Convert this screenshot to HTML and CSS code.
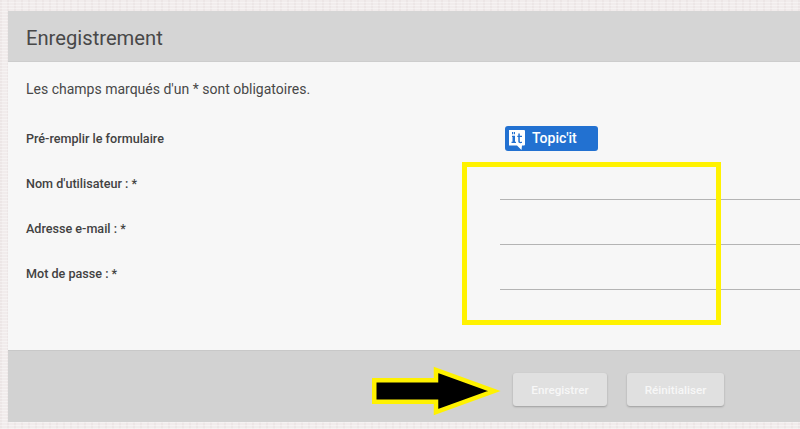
FILE: index.html
```html
<!DOCTYPE html>
<html lang="fr">
<head>
<meta charset="utf-8">
<title>Enregistrement</title>
<link rel="stylesheet" href="styles.css">
</head>
<body>
<main class="card">
  <header class="card-head"><h1>Enregistrement</h1></header>
  <form class="card-body">
    <p class="note">Les champs marqués d'un * sont obligatoires.</p>
    <div class="row row-topic">
      <span class="label">Pré-remplir le formulaire</span>
      <a class="topic" href="#">
        <svg class="topic-icon" width="16" height="20" viewBox="0 0 16 20" aria-hidden="true">
          <path d="M1 0h14a1 1 0 0 1 1 1v13.500a1 1 0 0 1-1 1h-2l-.5 4.500-4.500-4.500h-7.500a1 1 0 0 1-1-1v-13.500a1 1 0 0 1 1-1z" fill="#fff"/>
          <path d="M3 2h1.300v2.200h-1.300zM5 2h1v2.200h-1zM3 5.800h3v6h1v1.200h-4.500v-1.200h1v-4.800h-.5zM9.300 3.500h1.500v2.300h2.200v1.200h-2.200v4.300c0 .7.700.8 2.200.5v1.200c-2.300.4-3.700.1-3.700-1.500v-4.500h-1v-1.200h1z" fill="#2271d1"/>
        </svg>
        <span>Topic'it</span>
      </a>
    </div>
    <div class="row"><label class="label">Nom d'utilisateur : *</label><span class="field"></span></div>
    <div class="row"><label class="label">Adresse e-mail : *</label><span class="field"></span></div>
    <div class="row"><label class="label">Mot de passe : *</label><span class="field"></span></div>
  </form>
  <footer class="card-foot">
    <button class="btn btn-save" type="button">Enregistrer</button>
    <button class="btn btn-reset" type="button">Réinitialiser</button>
  </footer>
</main>
<div class="mark-box"></div>
<svg class="mark-arrow" width="134" height="50" viewBox="0 0 134 50" aria-hidden="true">
  <path d="M3.250 14.250h61.750v-10.250l58 21-58 21v-10.250h-61.750z" fill="#000" stroke="#fff200" stroke-width="4.500"/>
</svg>
</body>
</html>
```
FILE: styles.css
```css
* { box-sizing: border-box; }
html, body { height: 100%; }
body {
  margin: 0;
  overflow: hidden;
  background-color: #f1ecec;
  background-image:
    repeating-linear-gradient(0deg, rgba(255,255,255,.35) 0 1px, transparent 1px 3px),
    repeating-linear-gradient(90deg, rgba(225,215,215,.3) 0 2px, transparent 2px 7px);
  font-family: Roboto, "Liberation Sans", sans-serif;
  color: #424242;
  padding: 11px 0 0 8px;
  position: relative;
}
.card { background: #f7f7f7; }
.card-head {
  height: 51px;
  background: #d5d5d5;
  border-bottom: 1px solid #cdcdcd;
  padding: 3px 0 0 18px;
  display: flex;
  align-items: center;
}
.card-head h1 {
  margin: 0;
  font-size: 20.200px;
  font-weight: 400;
  color: #484848;
}
.card-body {
  height: 288px;
  padding: 19px 0 0 18px;
}
.note {
  margin: 0 0 26px;
  height: 17px;
  line-height: 17px;
  font-size: 14px;
  color: #484848;
}
.row {
  display: flex;
  align-items: center;
  height: 45px;
}
.row-topic { height: 30px; margin-bottom: 6px; }
.label {
  width: 474px;
  flex: none;
  padding-top: 2px;
  font-size: 12.600px;
  font-weight: 500;
  color: #424242;
}
.row-topic .label { width: 479px; padding-top: 0; padding-bottom: 2px; }
.field {
  flex: 1;
  align-self: flex-end;
  height: 1px;
  background: #b4b4b4;
  margin-bottom: 5px;
}
.topic {
  display: flex;
  align-items: center;
  gap: 7px;
  width: 93px;
  height: 25px;
  padding-left: 4px;
  background: #2271d1;
  border-radius: 3px;
  color: #fff;
  font-size: 14px;
  font-weight: 500;
  text-decoration: none;
  position: relative;
  top: -1px;
}
.topic-icon { margin-top: 3px; flex: none; }
.card-foot {
  height: 72px;
  background: #d2d2d2;
  border-top: 1px solid #c8c8c8;
  display: flex;
  align-items: flex-start;
  padding: 22px 0 0 505px;
  gap: 20px;
}
.btn {
  height: 33px;
  border: 0;
  border-radius: 3px;
  background: #e0e0e0;
  box-shadow: 0 1px 2px rgba(0,0,0,.25);
  color: #f7f7f7;
  font-family: Roboto, "Liberation Sans", sans-serif;
  font-size: 11.700px;
  font-weight: 500;
  padding: 0;
}
.btn-save { width: 94px; }
.btn-reset { width: 97px; }
.mark-box {
  position: absolute;
  left: 462px;
  top: 162px;
  width: 259px;
  height: 163px;
  border: 5px solid #fff200;
}
.mark-arrow {
  position: absolute;
  left: 371px;
  top: 366px;
}
```
